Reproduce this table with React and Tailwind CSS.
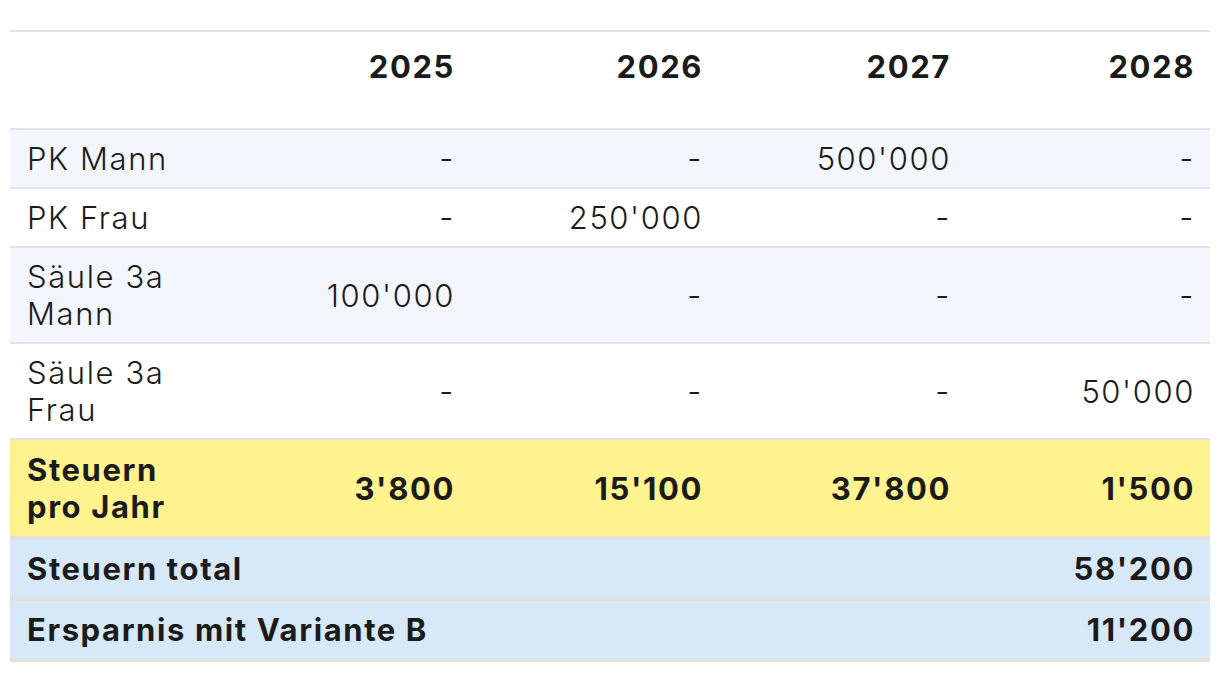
import React from "react";

const years = ["2025", "2026", "2027", "2028"];

const rows = [
  { label: "PK Mann", values: ["-", "-", "500'000", "-"], bg: "bg-[#f3f6fd]" },
  { label: "PK Frau", values: ["-", "250'000", "-", "-"], bg: "bg-white" },
  { label: "Säule 3a Mann", values: ["100'000", "-", "-", "-"], bg: "bg-[#f3f6fd]" },
  { label: "Säule 3a Frau", values: ["-", "-", "-", "50'000"], bg: "bg-white" },
];

const App = () => {
  return (
    <div
      className="w-full min-h-[674px] bg-white pt-[30px] px-[10px] text-[#1b1b1b]"
      style={{ fontFamily: "Inter, 'Liberation Sans', sans-serif" }}
    >
      <table className="w-[1200px] table-fixed border-collapse text-[31px] leading-[37px] tracking-[1.6px]">
        <colgroup>
          <col className="w-[212px]" />
          <col className="w-[248px]" />
          <col className="w-[248px]" />
          <col className="w-[248px]" />
          <col className="w-[244px]" />
        </colgroup>
        <thead>
          <tr className="border-t-2 border-b-2 border-[#e3e4e6]">
            <th className="pt-[16px] pb-[43px]" />
            {years.map((y) => (
              <th key={y} className="pt-[16px] pb-[43px] pl-[17px] pr-[15px] text-right font-bold">
                {y}
              </th>
            ))}
          </tr>
        </thead>
        <tbody>
          {rows.map((row) => (
            <tr key={row.label} className={`${row.bg} border-b-2 border-[#e3e4e6]`}>
              <td className="py-[10px] px-[17px] font-light align-middle">{row.label}</td>
              {row.values.map((v, i) => (
                <td key={i} className="py-[10px] pl-[17px] pr-[15px] text-right font-light align-middle">
                  {v}
                </td>
              ))}
            </tr>
          ))}
          <tr className="bg-[#fff38f] border-b-4 border-[#e0e0e0]">
            <td className="pt-[11px] pb-[11px] px-[17px] font-bold">Steuern pro Jahr</td>
            {["3'800", "15'100", "37'800", "1'500"].map((v) => (
              <td key={v} className="py-[11px] pl-[17px] pr-[15px] text-right font-bold">
                {v}
              </td>
            ))}
          </tr>
          <tr className="bg-[#d7e9f8] border-b-4 border-[#e0e0e0]">
            <td colSpan={4} className="py-[10px] px-[17px] font-bold">
              Steuern total
            </td>
            <td className="py-[10px] pl-[17px] pr-[15px] text-right font-bold">58'200</td>
          </tr>
          <tr className="bg-[#d7e9f8] border-b-4 border-[#e0e0e0]">
            <td colSpan={4} className="py-[10px] px-[17px] font-bold">
              Ersparnis mit Variante B
            </td>
            <td className="py-[10px] pl-[17px] pr-[15px] text-right font-bold">11'200</td>
          </tr>
        </tbody>
      </table>
    </div>
  );
};

export default App;
